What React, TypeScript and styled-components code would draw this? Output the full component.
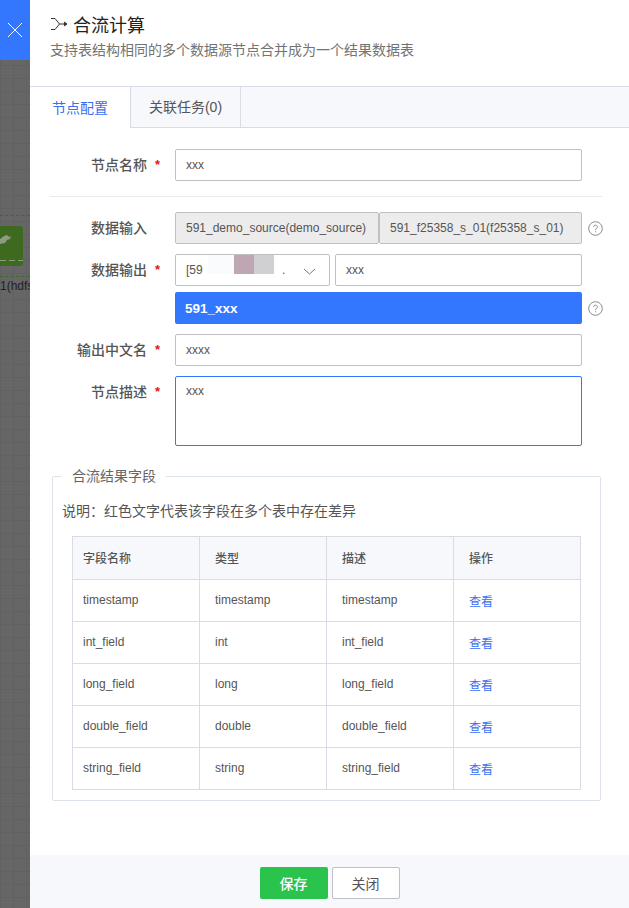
import React from "react";
import styled, { createGlobalStyle } from "styled-components";

const FONT = `"Liberation Sans", "Noto Sans CJK SC", sans-serif`;

const GlobalStyle = createGlobalStyle`
  html, body {
    margin: 0;
    padding: 0;
    background: #666666;
    font-family: ${FONT};
  }
  * { box-sizing: border-box; }
`;

const Page = styled.div`
  width: 629px;
  height: 908px;
  display: flex;
  overflow: hidden;
`;

const Backdrop = styled.div`
  position: relative;
  width: 30px;
  flex: none;
  background-color: #666666;
  background-image: linear-gradient(#616161 1px, transparent 1px),
    linear-gradient(90deg, #616161 1px, transparent 1px);
  background-size: 13px 13px;
  overflow: hidden;
`;

const CloseButton = styled.div`
  height: 60px;
  background: #3377ff;
  display: flex;
  align-items: center;
  justify-content: center;
`;

const CanvasNode = styled.svg`
  position: absolute;
  left: 0;
  top: 226px;
`;

const NodeLine = styled.div`
  position: absolute;
  left: 0;
  width: 30px;
  border-top: 1px dashed #3e6b24;
  top: ${(p: { $top: number }) => p.$top}px;
`;

const NodeLabel = styled.div`
  position: absolute;
  left: 0;
  top: 279px;
  font-size: 12px;
  color: #222222;
  white-space: nowrap;
`;

const Panel = styled.div`
  flex: 1;
  background: #ffffff;
  display: flex;
  flex-direction: column;
  min-width: 0;
`;

const Header = styled.div`
  height: 86px;
  padding: 13px 0 0 20px;
`;

const TitleRow = styled.div`
  display: flex;
  align-items: center;
  gap: 5px;
  height: 22px;
  font-size: 18px;
  color: #222222;
`;

const Subtitle = styled.div`
  margin-top: 5px;
  font-size: 14px;
  line-height: 20px;
  color: #737373;
`;

const Tabs = styled.div`
  display: flex;
  height: 42px;
  background: #f7f8fc;
  border-top: 1px solid #d9dbe5;
  border-bottom: 1px solid #d9dbe5;
`;

const Tab = styled.div<{ $active?: boolean }>`
  width: ${(p) => (p.$active ? "101px" : "110px")};
  margin-bottom: ${(p) => (p.$active ? "-1px" : "0")};
  padding-bottom: 2px;
  display: flex;
  align-items: center;
  justify-content: center;
  font-size: 14px;
  color: ${(p) => (p.$active ? "#3a6ff0" : "#555555")};
  background: ${(p) => (p.$active ? "#ffffff" : "#f7f8fc")};
  border-right: 1px solid #d9dbe5;
`;

const Body = styled.div`
  flex: 1;
  padding: 21px 27px 0 20px;
`;

const Row = styled.div<{ $gap?: number }>`
  display: flex;
  margin-bottom: ${(p) => p.$gap ?? 10}px;
`;

const Label = styled.div`
  width: 125px;
  flex: none;
  height: 32px;
  padding: 0 28px 2px 0;
  display: flex;
  align-items: center;
  justify-content: flex-end;
  font-size: 14px;
  font-weight: 500;
  color: #555555;
  position: relative;
`;

const Required = styled.span`
  position: absolute;
  right: 15px;
  top: 8px;
  color: #ee1111;
  font-size: 13px;
  line-height: 16px;
  font-weight: bold;
`;

const Field = styled.div`
  height: 32px;
  display: flex;
  align-items: center;
  padding: 0 10px;
  border: 1px solid #bfc0c6;
  border-radius: 2px;
  background: #ffffff;
  font-size: 12px;
  color: #555555;
  white-space: nowrap;
  flex: ${(p: { $w?: number }) => (p.$w ? "none" : "1")};
  width: ${(p: { $w?: number }) => (p.$w ? `${p.$w}px` : "auto")};
`;

const ReadonlyField = styled(Field)`
  background: #ececec;
`;

const FieldGroup = styled.div`
  width: 407px;
  flex: none;
  display: flex;
  gap: ${(p: { $gap?: number }) => p.$gap ?? 0}px;
`;

const SelectField = styled(Field)`
  position: relative;
`;

const Redaction = styled.div`
  position: absolute;
  top: 0;
  left: 32px;
  width: 66px;
  height: 19px;
  display: flex;
`;

const RedactionBlock = styled.span<{ $w: number; $c: string }>`
  width: ${(p) => p.$w}px;
  background: ${(p) => p.$c};
`;

const Chevron = styled.svg`
  position: absolute;
  right: 13px;
  top: 13px;
`;

const Dot = styled.span`
  position: absolute;
  left: 106px;
  top: 8px;
`;

const TableName = styled.div`
  height: 32px;
  width: 407px;
  flex: none;
  padding: 0 10px;
  display: flex;
  align-items: center;
  background: #3377ff;
  color: #ffffff;
  font-size: 13.5px;
  font-weight: bold;
  border-radius: 2px;
`;

const Help = styled.svg`
  margin: 9px 0 0 6px;
  flex: none;
`;

const Divider = styled.div`
  height: 1px;
  background: #e8e9ee;
  margin: 15px 0;
`;

const TextArea = styled(Field)`
  height: 70px;
  align-items: flex-start;
  padding-top: 6px;
  border-color: #3377ff;
  line-height: 16px;
`;

const Group = styled.fieldset`
  margin: 22px 1px 0 2px;
  padding: 0 9px 10px 9px;
  height: 333px;
  border: 1px solid #dde3ea;
  border-radius: 2px;
`;

const Legend = styled.legend`
  padding: 0 10px;
  font-size: 14px;
  line-height: 16px;
  color: #666666;
`;

const Note = styled.div`
  margin-top: 17px;
  margin-bottom: 15px;
  font-size: 14px;
  line-height: 20px;
  color: #555555;
`;

const Table = styled.table`
  width: 509px;
  margin-left: 10px;
  border-collapse: collapse;
  table-layout: fixed;
  font-size: 12px;
  color: #555555;
`;

const Th = styled.th`
  height: 43px;
  padding: 0 0 2px 15px;
  text-align: left;
  font-weight: 500;
  background: #f7f8fc;
  border: 1px solid #d9dbe5;

  &:first-child {
    padding-left: 10px;
  }
`;

const Td = styled.td`
  height: 42px;
  padding: 0 0 2px 15px;
  border: 1px solid #d9dbe5;

  &:first-child {
    padding-left: 10px;
  }
`;

const LinkText = styled.span`
  color: #3a6ff0;
  position: relative;
  top: 1px;
`;

const Footer = styled.div`
  height: 53px;
  flex: none;
  background: #f7f8fc;
  padding-top: 12px;
  display: flex;
  justify-content: center;
  gap: 4px;
`;

const Button = styled.div<{ $primary?: boolean }>`
  width: 68px;
  height: 32px;
  display: flex;
  align-items: center;
  justify-content: center;
  border-radius: 2px;
  font-size: 14px;
  font-weight: ${(p) => (p.$primary ? 500 : 400)};
  background: ${(p) => (p.$primary ? "#2ac34c" : "#ffffff")};
  color: ${(p) => (p.$primary ? "#ffffff" : "#555555")};
  border: ${(p) => (p.$primary ? "none" : "1px solid #bfc0c6")};
`;

const HelpIcon = () => (
  <Help width="15" height="15" viewBox="0 0 15 15" fill="none" stroke="#8a8a8a">
    <circle cx="7.5" cy="7.5" r="6.8" />
    <path d="M5.6 6C5.6 4.900 6.400 4.200 7.500 4.200s1.900 .7 1.900 1.700c0 1.300-1.900 1.400-1.900 3" />
    <path d="M7.500 10.200v1" />
  </Help>
);

const FIELDS = [
  ["timestamp", "timestamp"],
  ["int_field", "int"],
  ["long_field", "long"],
  ["double_field", "double"],
  ["string_field", "string"],
];

export default function App() {
  return (
    <Page>
      <GlobalStyle />
      <Backdrop>
        <CloseButton>
          <svg width="16" height="16" viewBox="0 0 16 16" stroke="#ffffff" strokeWidth="1">
            <path d="M1 1l14 14M15 1L1 15" />
          </svg>
        </CloseButton>
        <NodeLine $top={215} />
        <NodeLine $top={276} />
        <CanvasNode width="23" height="40" viewBox="0 0 23 40">
          <path d="M0 0h20a3 3 0 0 1 3 3v34a3 3 0 0 1-3 3H0z" fill="#3d6a1e" />
          <path d="M0 13l4-3 3-1 2 2 2-1-1 3-3 1-2 3-5 1z" fill="#8f9a86" />
          <path d="M0 34.500h23" stroke="#8f9a86" strokeWidth="1" strokeDasharray="6 3" />
        </CanvasNode>
        <NodeLabel>1(hdfs</NodeLabel>
      </Backdrop>
      <Panel>
        <Header>
          <TitleRow>
            <svg width="18" height="14" viewBox="0 0 18 14" fill="none" stroke="#333333" strokeWidth="1">
              <path d="M1 1.500h4l4.500 5.500L5 12.500H1M9.500 7H16" />
              <path d="M14.500 5.200L17 7l-2.500 1.800z" fill="#333333" />
            </svg>
            合流计算
          </TitleRow>
          <Subtitle>支持表结构相同的多个数据源节点合并成为一个结果数据表</Subtitle>
        </Header>
        <Tabs>
          <Tab $active>节点配置</Tab>
          <Tab>关联任务(0)</Tab>
        </Tabs>
        <Body>
          <Row $gap={0}>
            <Label>节点名称<Required>*</Required></Label>
            <FieldGroup><Field>xxx</Field></FieldGroup>
          </Row>
          <Divider />
          <Row>
            <Label>数据输入</Label>
            <FieldGroup>
              <ReadonlyField $w={204}>591_demo_source(demo_source)</ReadonlyField>
              <ReadonlyField>591_f25358_s_01(f25358_s_01)</ReadonlyField>
            </FieldGroup>
            <HelpIcon />
          </Row>
          <Row $gap={6}>
            <Label>数据输出<Required>*</Required></Label>
            <FieldGroup $gap={5}>
              <SelectField $w={155}>
                [59
                <Redaction>
                  <RedactionBlock $w={26} $c="#fafbfd" />
                  <RedactionBlock $w={20} $c="#bfa6b3" />
                  <RedactionBlock $w={20} $c="#d0d0d3" />
                </Redaction>
                <Dot>.</Dot>
                <Chevron width="13" height="7" viewBox="0 0 13 7" fill="none" stroke="#777777">
                  <path d="M1 1l5.500 5L12 1" />
                </Chevron>
              </SelectField>
              <Field>xxx</Field>
            </FieldGroup>
          </Row>
          <Row>
            <Label />
            <TableName>591_xxx</TableName>
            <HelpIcon />
          </Row>
          <Row>
            <Label>输出中文名<Required>*</Required></Label>
            <FieldGroup><Field>xxxx</Field></FieldGroup>
          </Row>
          <Row $gap={0}>
            <Label>节点描述<Required>*</Required></Label>
            <FieldGroup><TextArea>xxx</TextArea></FieldGroup>
          </Row>
          <Group>
            <Legend>合流结果字段</Legend>
            <Note>说明：红色文字代表该字段在多个表中存在差异</Note>
            <Table>
              <thead>
                <tr>
                  <Th>字段名称</Th>
                  <Th>类型</Th>
                  <Th>描述</Th>
                  <Th>操作</Th>
                </tr>
              </thead>
              <tbody>
                {FIELDS.map(([name, type]) => (
                  <tr key={name}>
                    <Td>{name}</Td>
                    <Td>{type}</Td>
                    <Td>{name}</Td>
                    <Td><LinkText>查看</LinkText></Td>
                  </tr>
                ))}
              </tbody>
            </Table>
          </Group>
        </Body>
        <Footer>
          <Button $primary>保存</Button>
          <Button>关闭</Button>
        </Footer>
      </Panel>
    </Page>
  );
}
